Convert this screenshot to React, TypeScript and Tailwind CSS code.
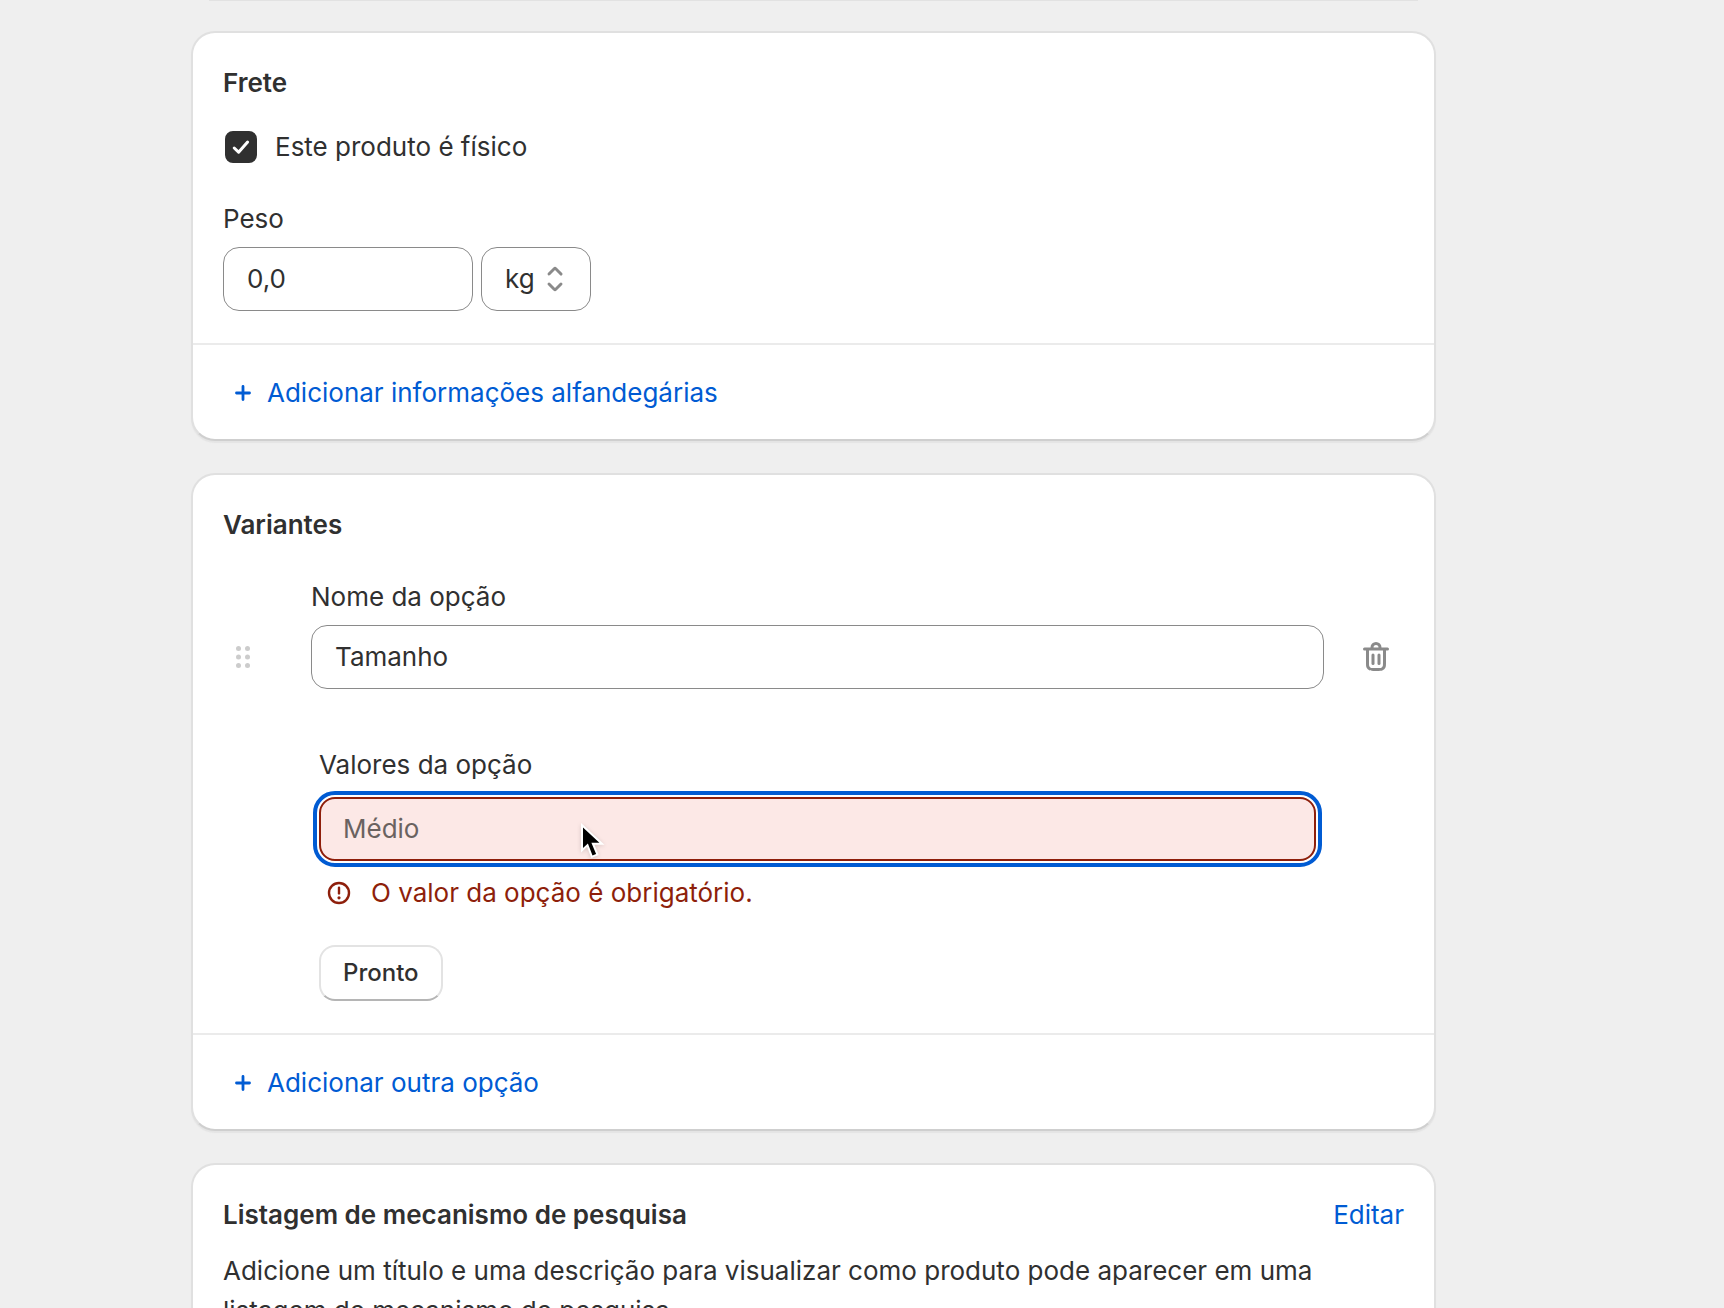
import React, { ReactNode, useState } from "react";

const FIELD = "h-16 rounded-2xl border border-[#8a8a8a] bg-white px-[23px] text-[#303030]";

const UI_CONTENT = {
    shipping: {
        title: "Frete",
        physical: "Este produto é físico",
        weight: "Peso",
        customs: "Adicionar informações alfandegárias",
    },
    variants: {
        title: "Variantes",
        name: "Nome da opção",
        values: "Valores da opção",
        placeholder: "Médio",
        required: "O valor da opção é obrigatório.",
        done: "Pronto",
        addOption: "Adicionar outra opção",
    },
    seo: {
        title: "Listagem de mecanismo de pesquisa",
        edit: "Editar",
        descr: "Adicione um título e uma descrição para visualizar como produto pode aparecer em uma listagem de mecanismo de pesquisa.",
    },
};

const PlusIcon = () => (
    <svg viewBox="0 0 32 32" className="size-8 shrink-0" fill="none" aria-hidden="true">
        <path d="M16 9.5v13M9.5 16h13" stroke="currentColor" strokeWidth="2.8" strokeLinecap="round" />
    </svg>
);

const CheckIcon = () => (
    <svg viewBox="0 0 32 32" className="pointer-events-none absolute inset-0 size-8" fill="none" aria-hidden="true">
        <path d="M9.2 17l4.4 4.2 9-10.2" stroke="#fff" strokeWidth="3" strokeLinecap="round" strokeLinejoin="round" />
    </svg>
);

const SelectIcon = () => (
    <svg
        viewBox="0 0 20 20"
        className="pointer-events-none absolute top-3 right-4 size-10 text-[#8a8a8a]"
        fill="currentColor"
        aria-hidden="true"
    >
        <path d="M10.884 4.323a1.25 1.25 0 0 0-1.768 0l-2.646 2.647a.75.75 0 0 0 1.06 1.06l2.47-2.47 2.47 2.47a.75.75 0 1 0 1.06-1.06l-2.646-2.647Z" />
        <path d="m13.53 13.03-2.646 2.647a1.25 1.25 0 0 1-1.768 0l-2.646-2.647a.75.75 0 0 1 1.06-1.06l2.47 2.47 2.47-2.47a.75.75 0 0 1 1.06 1.06Z" />
    </svg>
);

const DragIcon = () => (
    <svg viewBox="0 0 20 20" className="size-10" fill="currentColor" aria-hidden="true">
        {[5.75, 10, 14.25].map((cy) => (
            <React.Fragment key={cy}>
                <circle cx="7.75" cy={cy} r="1.25" />
                <circle cx="12.25" cy={cy} r="1.25" />
            </React.Fragment>
        ))}
    </svg>
);

const TrashIcon = () => (
    <svg viewBox="0 0 20 20" className="size-10" fill="currentColor" aria-hidden="true">
        <path d="M11.5 8.25a.75.75 0 0 1 .75.75v4.25a.75.75 0 0 1-1.5 0v-4.25a.75.75 0 0 1 .75-.75Z" />
        <path d="M9.25 9a.75.75 0 0 0-1.5 0v4.25a.75.75 0 0 0 1.5 0v-4.25Z" />
        <path
            fillRule="evenodd"
            d="M7.25 5.25a2.75 2.75 0 0 1 5.5 0h3a.75.75 0 0 1 0 1.5h-.75v5.45c0 1.68 0 2.52-.327 3.162a3 3 0 0 1-1.311 1.311c-.642.327-1.482.327-3.162.327h-.4c-1.68 0-2.52 0-3.162-.327a3 3 0 0 1-1.311-1.311c-.327-.642-.327-1.482-.327-3.162v-5.45h-.75a.75.75 0 0 1 0-1.5h3Zm1.5 0a1.25 1.25 0 1 1 2.5 0h-2.5Zm-2.25 1.5h7v5.45c0 .865-.001 1.423-.036 1.848-.033.408-.09.559-.128.633a1.5 1.5 0 0 1-.655.655c-.074.038-.225.095-.633.128-.425.035-.983.036-1.848.036h-.4c-.865 0-1.423-.001-1.848-.036-.408-.033-.559-.09-.633-.128a1.5 1.5 0 0 1-.656-.655c-.037-.074-.094-.225-.127-.633-.035-.425-.036-.983-.036-1.848v-5.45Z"
        />
    </svg>
);

const AlertIcon = () => (
    <svg viewBox="0 0 20 20" className="size-8 shrink-0" fill="currentColor" aria-hidden="true">
        <path d="M10 6a.75.75 0 0 1 .75.75v3.5a.75.75 0 0 1-1.5 0v-3.5a.75.75 0 0 1 .75-.75Z" />
        <circle cx="10" cy="13" r="1" />
        <path fillRule="evenodd" d="M17 10a7 7 0 1 1-14 0 7 7 0 0 1 14 0Zm-1.5 0a5.5 5.5 0 1 1-11 0 5.5 5.5 0 0 1 11 0Z" />
    </svg>
);

// * Mouse pointer over the empty value field
const Pointer = () => (
    <svg
        viewBox="0 0 24 38"
        className="pointer-events-none absolute top-6 left-[261px] h-[38px] w-6 overflow-visible drop-shadow-sm"
        aria-hidden="true"
    >
        <path
            d="M3 6.5V27l4.9-4.6 4.6 12 3.6-1.5-4.7-11.2h8Z"
            fill="#000"
            stroke="#fff"
            strokeWidth="4"
            strokeLinejoin="miter"
            paintOrder="stroke"
        />
    </svg>
);

function Card({ children, footer }: { children: ReactNode; footer?: string }) {
    return (
        <section className="rounded-3xl border-2 border-[#e0e0e0] border-b-[#cfcfcf] bg-white shadow-[0_2px_1px_0_#e4e4e4]">
            <div className="px-[30px] pt-[30px] pb-8">{children}</div>
            {footer && (
                <div className="border-t-2 border-[#ebebeb] px-[34px] pt-7 pb-[26px]">
                    <button type="button" className="flex items-center gap-2 text-[#005bd3]">
                        <PlusIcon />
                        {footer}
                    </button>
                </div>
            )}
        </section>
    );
}

// * Product form - shipping, variants and search listing
export default function ProductForm() {
    const [isPhysical, setIsPhysical] = useState(true);
    const [weight, setWeight] = useState("0,0");
    const [optionName, setOptionName] = useState("Tamanho");
    const [optionValue, setOptionValue] = useState("");

    return (
        <div className="h-screen overflow-hidden bg-[#efefef] font-[Inter,sans-serif] text-[26px] leading-10 text-[#303030]">
            <main className="flex flex-col gap-8 pr-72 pl-[191px]">
                {/* bottom edge of the card scrolled out of view */}
                <div className="mx-[18px] -mb-0.5 h-px bg-[#e2e2e2]" />

                <Card footer={UI_CONTENT.shipping.customs}>
                    <h2 className="font-semibold">{UI_CONTENT.shipping.title}</h2>
                    <label className="mt-6 flex items-center gap-[18px] pl-0.5">
                        <span className="relative size-8">
                            <input
                                type="checkbox"
                                className="block size-8 appearance-none rounded-lg border-2 border-[#303030] checked:bg-[#303030]"
                                checked={isPhysical}
                                onChange={(e) => setIsPhysical(e.target.checked)}
                            />
                            {isPhysical && <CheckIcon />}
                        </span>
                        {UI_CONTENT.shipping.physical}
                    </label>
                    <label
                        htmlFor="weight"
                        className="mt-8 block"
                    >
                        {UI_CONTENT.shipping.weight}
                    </label>
                    <div className="mt-2 flex gap-2">
                        <input
                            id="weight"
                            type="text"
                            className={`${FIELD} w-[250px] pb-0.5`}
                            value={weight}
                            onChange={(e) => setWeight(e.target.value)}
                        />
                        <div className="relative">
                            <select
                                aria-label="Unidade"
                                className={`${FIELD} w-[110px] appearance-none`}
                                defaultValue="kg"
                            >
                                <option>kg</option>
                                <option>g</option>
                            </select>
                            <SelectIcon />
                        </div>
                    </div>
                </Card>

                <Card footer={UI_CONTENT.variants.addOption}>
                    <h2 className="font-semibold">{UI_CONTENT.variants.title}</h2>
                    <div className="mt-8 flex items-end pr-2">
                        <button
                            type="button"
                            aria-label="Mover"
                            className="mb-3 text-[#cccccc]"
                        >
                            <DragIcon />
                        </button>
                        <div className="mr-8 ml-12 flex-1">
                            <label
                                htmlFor="option-name"
                                className="block"
                            >
                                {UI_CONTENT.variants.name}
                            </label>
                            <input
                                id="option-name"
                                type="text"
                                className={`${FIELD} mt-2 block w-full pb-0.5`}
                                value={optionName}
                                onChange={(e) => setOptionName(e.target.value)}
                            />
                        </div>
                        <button
                            type="button"
                            aria-label="Excluir"
                            className="mb-3 text-[#8a8a8a]"
                        >
                            <TrashIcon />
                        </button>
                    </div>

                    <div className="mt-14 mr-[88px] ml-24">
                        <label
                            htmlFor="option-value"
                            className="block"
                        >
                            {UI_CONTENT.variants.values}
                        </label>
                        <div className="relative mt-3">
                            <input
                                id="option-value"
                                type="text"
                                required
                                aria-describedby="option-error"
                                placeholder={UI_CONTENT.variants.placeholder}
                                className="block h-16 w-full rounded-2xl border-2 border-[#8e1f0b] bg-[#fce8e6] px-[22px] pb-0.5 outline-4 outline-offset-2 outline-[#005bd3] placeholder:text-[#6a6260]"
                                value={optionValue}
                                onChange={(e) => setOptionValue(e.target.value)}
                            />
                            <Pointer />
                        </div>
                        <p
                            id="option-error"
                            className="mt-3 flex items-center gap-4 pl-1 text-[#8e1f0b]"
                        >
                            <AlertIcon />
                            {UI_CONTENT.variants.required}
                        </p>
                        <button
                            type="button"
                            className="mt-8 block h-14 rounded-2xl border-2 border-[#e3e3e3] border-b-[#b5b5b5] px-[22px] text-2xl font-medium"
                        >
                            {UI_CONTENT.variants.done}
                        </button>
                    </div>
                </Card>

                <Card>
                    <div className="flex justify-between">
                        <h2 className="font-semibold">{UI_CONTENT.seo.title}</h2>
                        <a
                            href="#seo"
                            className="text-[#005bd3]"
                        >
                            {UI_CONTENT.seo.edit}
                        </a>
                    </div>
                    <p className="mt-4">{UI_CONTENT.seo.descr}</p>
                </Card>
            </main>
        </div>
    );
}
